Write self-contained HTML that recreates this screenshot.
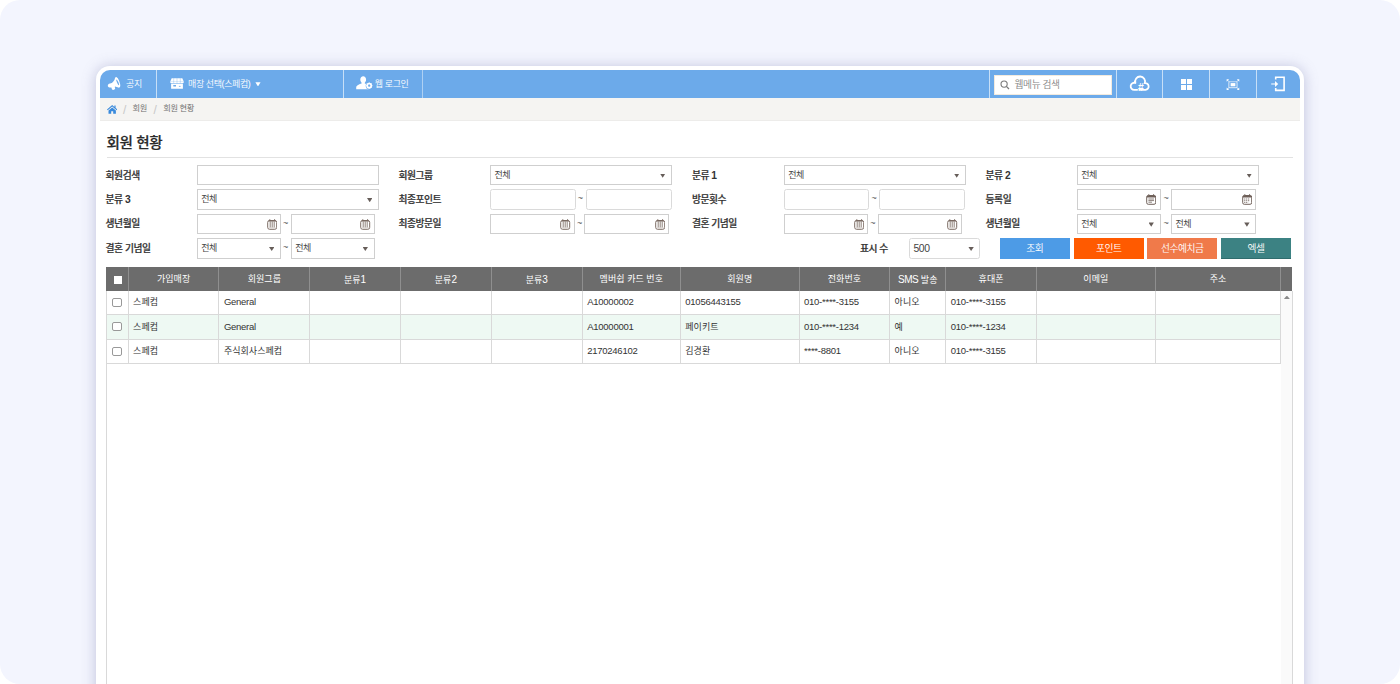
<!DOCTYPE html>
<html lang="ko">
<head>
<meta charset="utf-8">
<title>회원 현황</title>
<style>
*{box-sizing:border-box;margin:0;padding:0}
html,body{width:1400px;height:684px;overflow:hidden;background:#fff}
body{font-family:"Liberation Sans","Noto Sans CJK KR",sans-serif;color:#333;font-weight:350}
.bg{position:absolute;left:0;top:0;width:1400px;height:684px;border-radius:20px;background:#f3f5fe;overflow:hidden}
.card{position:absolute;left:96px;top:66px;width:1208px;height:700px;background:#fff;border-radius:14px;box-shadow:0 1px 13px 1px rgba(110,114,165,.34)}
.app{position:absolute;left:4px;top:4px;width:1200px;height:696px;background:#fff;border-radius:10px;overflow:hidden}
.abs{position:absolute}
.topbar{position:absolute;left:0;top:0;width:1200px;height:28px;background:#6caaea;color:#fff;font-size:10px}
.sep{position:absolute;top:0;width:1px;height:28px;background:rgba(255,255,255,.62)}
.tb-t{position:absolute;top:0;height:28px;line-height:28px;white-space:nowrap;font-size:9px;letter-spacing:-.4px}
.crumb{position:absolute;left:0;top:28px;width:1200px;height:22.6px;background:#f5f4f2;border-bottom:1px solid #edecea;font-size:8.25px;letter-spacing:-.35px;color:#6a6a6a}
.crumb span{position:absolute;top:0;line-height:22.6px;white-space:nowrap}
.crumb span.sl{font-size:12px;color:#c8c8c8;line-height:24.4px;letter-spacing:0}
.title{position:absolute;left:6.5px;top:61px;height:24px;line-height:24px;font-size:14.6px;letter-spacing:-.4px;font-weight:500;-webkit-text-stroke:.22px #2a2a2a;color:#2a2a2a;white-space:nowrap}
.hr{position:absolute;left:6.7px;top:87px;width:1186px;height:1px;background:#e2e2e2}
.lbl{position:absolute;height:20.3px;line-height:20.3px;font-size:9.75px;letter-spacing:-.45px;font-weight:500;-webkit-text-stroke:.22px #333;color:#333;white-space:nowrap;margin-top:.6px}
.lbl b{font-size:10.3px;letter-spacing:0;font-weight:bold;-webkit-text-stroke:0}
.inp{position:absolute;height:20.3px;background:#fff;border:1px solid #cfcfcf;font-size:9px;font-weight:400;letter-spacing:-.4px;line-height:19.4px;color:#444;padding-left:3.2px;white-space:nowrap}
.inp.r{border-radius:2.5px;border-color:#dadada}
.inp i.a{position:absolute;top:7.6px;right:5.6px;width:5.4px;height:4.2px;background:#665d59;clip-path:polygon(0 0,100% 0,50% 100%)}
.inp svg{position:absolute;top:3.7px;right:3.1px;width:10.4px;height:11px}
.til{position:absolute;height:20.3px;line-height:19px;font-size:9px;color:#555}
.btn{position:absolute;top:168.3px;height:20.6px;width:70.2px;color:#fff;font-size:9.75px;letter-spacing:-.45px;line-height:22.8px;text-align:center;white-space:nowrap}
.grid{position:absolute;left:5.6px;top:196.6px;width:1186.9px;height:500px}
.grid:before{content:'';position:absolute;left:0;top:24.4px;width:1px;height:480px;background:#d9d9d9;z-index:2}
.grid:after{content:'';position:absolute;left:1186px;top:24.4px;width:1px;height:480px;background:#d9d9d9}
.gh{position:absolute;left:0;top:0;width:1186.9px;height:24.4px;background:#6c6c6c}
.gh div{position:absolute;top:0;height:24.4px;line-height:25.4px;text-align:center;color:#fff;font-size:9px;letter-spacing:.05px;font-weight:400;border-left:1px solid #8f8f8f;white-space:nowrap}
.row{position:absolute;left:0;width:1175.7px;height:24.4px;border-bottom:1px solid #d9d9d9;border-right:1px solid #d9d9d9}
.row.alt{background:#eef9f3}
.row div{position:absolute;top:0;height:24.4px;line-height:24.6px;font-size:9px;color:#333;border-left:1px solid #d9d9d9;padding-left:4.4px;white-space:nowrap}
.row.r3 div{line-height:23.4px}
.row.r1 div{line-height:23px;height:23.7px}
.row div.k{letter-spacing:.05px;font-weight:400}
.row div.n{font-size:9.5px;letter-spacing:-.25px;line-height:22.6px}
.row.r1 div.n{line-height:21px}
.row.alt div.n{line-height:24.6px}
.row.r3 div.n{line-height:21.4px}
.cb{position:absolute;left:6.9px;top:7.2px;width:9.2px;height:9.2px;border:1px solid #999;border-radius:2px;background:#fff}
.sb{position:absolute;left:1175.7px;top:24.4px;width:11px;height:480px;background:#fafafa}
</style>
</head>
<body>
<div class="bg">
<div class="card">
<div class="app">

<!-- top bar -->
<div class="topbar">
  <svg class="abs" style="left:0;top:0" width="30" height="28" viewBox="0 0 30 28"><path d="M16.1 6.9 C17.6 7 19.4 10.4 20.1 14.1 C20.4 15.8 20.3 16.6 19.9 17 C19.5 17.6 18.9 17.7 18.4 17.6 L15 16.6 L14.8 17.1 L15.2 19 L13.3 20.1 L12 19.4 L11.4 17.6 L9.6 17.4 C8.4 17.2 7.7 16.4 7.8 15.4 C7.9 14.6 8.3 14 9 13.7 C10.5 13.2 11.6 13 12.4 12.4 C13.4 11.6 14.2 10.8 14.6 9.6 C14.9 8.6 15.1 7 16.1 6.9 Z" fill="#fff"/><ellipse cx="17.7" cy="12.4" rx="0.7" ry="3.1" transform="rotate(-25 17.7 12.4)" fill="#6caaea"/></svg>
  <span class="tb-t" style="left:26px">공지</span>
  <i class="sep" style="left:56px"></i>
  <svg class="abs" style="left:69.7px;top:7.7px" width="14" height="11" viewBox="0 0 14 11"><path d="M1.7 0.2 H12.3 L13.8 3.7 C13.8 4.8 13.2 5.3 12.4 5.3 H1.6 C0.8 5.3 0.2 4.8 0.2 3.7 Z" fill="#fff"/><rect x="1.1" y="5.7" width="11.8" height="5.1" rx=".4" fill="#fff"/><path d="M3.7 0.2V5.3M7 0.2V5.3M10.3 0.2V5.3" stroke="#6caaea" stroke-width=".45" opacity=".7"/><path d="M0.4 3.5H13.6" stroke="#6caaea" stroke-width=".35" opacity=".6"/><rect x="3.3" y="7" width="2.7" height="1.5" fill="#6caaea"/><rect x="8.9" y="7.9" width="1.7" height=".8" fill="#6caaea"/></svg>
  <span class="tb-t" style="left:88px">매장 선택(스페컴)</span>
  <i class="abs" style="left:155.4px;top:12.3px;width:5.2px;height:4.2px;background:#fff;clip-path:polygon(0 0,100% 0,50% 100%)"></i>
  <i class="sep" style="left:243px"></i>
  <svg class="abs" style="left:255.6px;top:6.4px" width="17" height="14" viewBox="0 0 17 14"><path d="M7.2 0.3 C8.9 0.3 10.1 1.6 10.1 3.5 C10.1 4.9 9.6 6 8.8 6.7 V7.6 C10.6 8.3 12.6 9.4 12.6 11.6 V13.2 H0.2 V11.6 C0.2 9.4 3.6 8.3 5.6 7.6 V6.7 C4.8 6 4.3 4.9 4.3 3.5 C4.3 1.6 5.5 0.3 7.2 0.3 Z" fill="#fff"/><circle cx="13.2" cy="9.7" r="3.5" fill="#6caaea"/><circle cx="13.2" cy="9.7" r="2" fill="none" stroke="#fff" stroke-width="1.7"/><path d="M13.2 6.4V13M9.9 9.7H16.5M10.9 7.4L15.5 12M15.5 7.4L10.9 12" stroke="#fff" stroke-width=".9"/><circle cx="13.2" cy="9.7" r="1.15" fill="#6caaea"/></svg>
  <span class="tb-t" style="left:274.8px">웹 로그인</span>
  <i class="sep" style="left:322.3px;background:rgba(255,255,255,.45)"></i>

  <i class="sep" style="left:889.3px"></i>
  <div class="abs" style="left:893.6px;top:4.6px;width:118.6px;height:20px;background:#fff;border:1px solid #f2eade"></div>
  <svg class="abs" style="left:899.6px;top:10px" width="10" height="10" viewBox="0 0 10 10"><circle cx="4.1" cy="4.1" r="3.1" fill="none" stroke="#7a7a7a" stroke-width="1.1"/><path d="M6.4 6.4 L9 9" stroke="#7a7a7a" stroke-width="1.3"/></svg>
  <span class="tb-t" style="left:914.6px;color:#858585;font-size:9.75px;letter-spacing:-.45px;top:.9px">웹메뉴 검색</span>
  <i class="sep" style="left:1016.4px"></i>
  <svg class="abs" style="left:1028.6px;top:5.4px" width="22" height="17" viewBox="0 0 22 17"><path d="M8.2 14.85 H5.2 A3.55 3.55 0 1 1 6.4 7.95 A4.95 4.95 0 1 1 15.75 8.2 A3.35 3.35 0 1 1 16.5 14.85 H10.4" fill="none" stroke="#fff" stroke-width="1.8" stroke-linecap="round" stroke-linejoin="round"/><text x="12" y="15.6" text-anchor="middle" font-family="Liberation Sans, sans-serif" font-weight="bold" font-size="10.4" fill="#fff">#</text></svg>
  <i class="sep" style="left:1062.3px"></i>
  <svg class="abs" style="left:1081px;top:8.8px" width="11" height="11" viewBox="0 0 11 11"><rect x="0" y="0" width="5" height="5" fill="#fff"/><rect x="6" y="0" width="5" height="5" fill="#fff"/><rect x="0" y="6" width="5" height="5" fill="#fff"/><rect x="6" y="6" width="5" height="5" fill="#fff"/></svg>
  <i class="sep" style="left:1109.4px"></i>
  <svg class="abs" style="left:1126.2px;top:8.7px" width="13.8" height="11.4" viewBox="0 0 14 12"><path d="M0.4 0.3H3L0.4 2.9ZM13.7 0.3V2.9L11.1 0.3ZM13.7 11.5H11.1L13.7 8.9ZM0.4 11.5V8.9L3 11.5Z" fill="#fff"/><path d="M1.3 1.2L3 2.9M12.8 1.2L11.1 2.9M12.8 10.6L11.1 8.9M1.3 10.6L3 8.9" stroke="#fff" stroke-width=".9"/><rect x="2.7" y="2.9" width="8.7" height="6.2" rx="1" fill="none" stroke="#fff" stroke-width="1.3" opacity=".6"/><rect x="4.6" y="4.3" width="5" height="3.4" fill="#fff"/></svg>
  <i class="sep" style="left:1156.2px"></i>
  <svg class="abs" style="left:1170px;top:5px" width="16" height="18" viewBox="0 0 16 18"><path d="M5.7 4.6V2.2H14.1V15.4H5.7V13" fill="none" stroke="#fff" stroke-width="1.6"/><path d="M1.2 9H6" stroke="#fff" stroke-width="1.15"/><path d="M5 5.9L8.2 9L5 12.1Z" fill="#fff"/></svg>
</div>

<!-- breadcrumb -->
<div class="crumb">
  <svg class="abs" style="left:6.8px;top:6.8px" width="10.4" height="8.8" viewBox="0 0 10.4 8.8"><path d="M5.2 0L0 4.4L0.7 5.2L5.2 1.5L9.7 5.2L10.4 4.4L8.6 2.9V0.6H7.4V1.9Z" fill="#3a8adc"/><path d="M5.2 2.4L1.5 5.5V8.8H4.2V6.2H6.2V8.8H8.9V5.5Z" fill="#3a8adc"/></svg>
  <span class="sl" style="left:22.9px">/</span>
  <span style="left:32.6px">회원</span>
  <span class="sl" style="left:53.6px">/</span>
  <span style="left:63.2px">회원 현황</span>
</div>

<div class="title">회원 현황</div>
<div class="hr"></div>

<!-- filter row 1 -->
<div class="lbl" style="left:5.6px;top:95px">회원검색</div>
<div class="inp" style="left:97px;top:95px;width:182px"></div>
<div class="lbl" style="left:298.4px;top:95px">회원그룹</div>
<div class="inp" style="left:390.3px;top:95px;width:181.7px">전체<i class="a"></i></div>
<div class="lbl" style="left:592px;top:95px">분류 <b>1</b></div>
<div class="inp" style="left:684px;top:95px;width:182px">전체<i class="a"></i></div>
<div class="lbl" style="left:885.6px;top:95px">분류 <b>2</b></div>
<div class="inp" style="left:977px;top:95px;width:181.5px">전체<i class="a"></i></div>

<!-- filter row 2 -->
<div class="lbl" style="left:5.6px;top:119.4px">분류 <b>3</b></div>
<div class="inp" style="left:97px;top:119.4px;width:182px">전체<i class="a"></i></div>
<div class="lbl" style="left:298.4px;top:119.4px">최종포인트</div>
<div class="inp r" style="left:390.3px;top:119.4px;width:85.4px"></div>
<span class="til" style="left:477.8px;top:119.4px">~</span>
<div class="inp r" style="left:486.3px;top:119.4px;width:86px"></div>
<div class="lbl" style="left:592px;top:119.4px">방문횟수</div>
<div class="inp r" style="left:684px;top:119.4px;width:84.6px"></div>
<span class="til" style="left:771.4px;top:119.4px">~</span>
<div class="inp r" style="left:779.4px;top:119.4px;width:85.4px"></div>
<div class="lbl" style="left:885.6px;top:119.4px">등록일</div>
<div class="inp" style="left:977px;top:119.4px;width:83.5px"><svg viewBox="0 0 10.4 11"><rect x="0.7" y="1.5" width="9" height="8.8" rx="1.6" fill="#fff" stroke="#6e5f58" stroke-width="1"/><path d="M0.9 2.6H9.5" stroke="#6e5f58" stroke-width="1.6"/><path d="M2.8 0.2V1.6M7.6 0.2V1.6" stroke="#6e5f58" stroke-width="1"/><path d="M2.4 5H8M2.4 6.6H8M2.4 8.2H6" stroke="#6e5f58" stroke-width=".8"/></svg></div>
<span class="til" style="left:1063.6px;top:119.4px">~</span>
<div class="inp" style="left:1071.2px;top:119.4px;width:85px"><svg viewBox="0 0 10.4 11"><rect x="0.7" y="1.5" width="9" height="8.8" rx="1.6" fill="#fff" stroke="#6e5f58" stroke-width="1"/><path d="M0.9 2.6H9.5" stroke="#6e5f58" stroke-width="1.6"/><path d="M2.8 0.2V1.6M7.6 0.2V1.6" stroke="#6e5f58" stroke-width="1"/><path d="M2.3 5H8.1M2.3 6.7H8.1M2.3 8.4H6.3" stroke="#6e5f58" stroke-width="1" stroke-dasharray="1 .95"/></svg></div>

<!-- filter row 3 -->
<div class="lbl" style="left:5.6px;top:143.9px">생년월일</div>
<div class="inp" style="left:97px;top:143.9px;width:84px"><svg viewBox="0 0 10.4 11"><rect x="0.7" y="1.5" width="9" height="8.8" rx="1.9" fill="#fff" stroke="#7a6a62" stroke-width="1"/><path d="M1.6 1.9H8.8" stroke="#7a6a62" stroke-width="1.2"/><path d="M2.8 0.2V2M7.6 0.2V2" stroke="#7a6a62" stroke-width="1"/><path d="M3.2 2.4V8.6M5.2 2.4V8.6M7.2 2.4V8.6" stroke="#7a6a62" stroke-width=".85"/><path d="M1.6 8.9H8.8" stroke="#cfc6c0" stroke-width=".8"/></svg></div>
<span class="til" style="left:183px;top:143.9px">~</span>
<div class="inp" style="left:191px;top:143.9px;width:83.6px"><svg viewBox="0 0 10.4 11"><rect x="0.7" y="1.5" width="9" height="8.8" rx="1.9" fill="#fff" stroke="#7a6a62" stroke-width="1"/><path d="M1.6 1.9H8.8" stroke="#7a6a62" stroke-width="1.2"/><path d="M2.8 0.2V2M7.6 0.2V2" stroke="#7a6a62" stroke-width="1"/><path d="M3.2 2.4V8.6M5.2 2.4V8.6M7.2 2.4V8.6" stroke="#7a6a62" stroke-width=".85"/><path d="M1.6 8.9H8.8" stroke="#cfc6c0" stroke-width=".8"/></svg></div>
<div class="lbl" style="left:298.4px;top:143.9px">최종방문일</div>
<div class="inp" style="left:390.3px;top:143.9px;width:84.4px"><svg viewBox="0 0 10.4 11"><rect x="0.7" y="1.5" width="9" height="8.8" rx="1.9" fill="#fff" stroke="#7a6a62" stroke-width="1"/><path d="M1.6 1.9H8.8" stroke="#7a6a62" stroke-width="1.2"/><path d="M2.8 0.2V2M7.6 0.2V2" stroke="#7a6a62" stroke-width="1"/><path d="M3.2 2.4V8.6M5.2 2.4V8.6M7.2 2.4V8.6" stroke="#7a6a62" stroke-width=".85"/><path d="M1.6 8.9H8.8" stroke="#cfc6c0" stroke-width=".8"/></svg></div>
<span class="til" style="left:477px;top:143.9px">~</span>
<div class="inp" style="left:484.3px;top:143.9px;width:85px"><svg viewBox="0 0 10.4 11"><rect x="0.7" y="1.5" width="9" height="8.8" rx="1.9" fill="#fff" stroke="#7a6a62" stroke-width="1"/><path d="M1.6 1.9H8.8" stroke="#7a6a62" stroke-width="1.2"/><path d="M2.8 0.2V2M7.6 0.2V2" stroke="#7a6a62" stroke-width="1"/><path d="M3.2 2.4V8.6M5.2 2.4V8.6M7.2 2.4V8.6" stroke="#7a6a62" stroke-width=".85"/><path d="M1.6 8.9H8.8" stroke="#cfc6c0" stroke-width=".8"/></svg></div>
<div class="lbl" style="left:592px;top:143.9px">결혼 기념일</div>
<div class="inp" style="left:684px;top:143.9px;width:84.2px"><svg viewBox="0 0 10.4 11"><rect x="0.7" y="1.5" width="9" height="8.8" rx="1.9" fill="#fff" stroke="#7a6a62" stroke-width="1"/><path d="M1.6 1.9H8.8" stroke="#7a6a62" stroke-width="1.2"/><path d="M2.8 0.2V2M7.6 0.2V2" stroke="#7a6a62" stroke-width="1"/><path d="M3.2 2.4V8.6M5.2 2.4V8.6M7.2 2.4V8.6" stroke="#7a6a62" stroke-width=".85"/><path d="M1.6 8.9H8.8" stroke="#cfc6c0" stroke-width=".8"/></svg></div>
<span class="til" style="left:770.2px;top:143.9px">~</span>
<div class="inp" style="left:778.3px;top:143.9px;width:83.4px"><svg viewBox="0 0 10.4 11"><rect x="0.7" y="1.5" width="9" height="8.8" rx="1.9" fill="#fff" stroke="#7a6a62" stroke-width="1"/><path d="M1.6 1.9H8.8" stroke="#7a6a62" stroke-width="1.2"/><path d="M2.8 0.2V2M7.6 0.2V2" stroke="#7a6a62" stroke-width="1"/><path d="M3.2 2.4V8.6M5.2 2.4V8.6M7.2 2.4V8.6" stroke="#7a6a62" stroke-width=".85"/><path d="M1.6 8.9H8.8" stroke="#cfc6c0" stroke-width=".8"/></svg></div>
<div class="lbl" style="left:885.6px;top:143.9px">생년월일</div>
<div class="inp" style="left:977px;top:143.9px;width:83.5px">전체<i class="a"></i></div>
<span class="til" style="left:1063.6px;top:143.9px">~</span>
<div class="inp" style="left:1071.2px;top:143.9px;width:85px">전체<i class="a"></i></div>

<!-- filter row 4 -->
<div class="lbl" style="left:5.6px;top:168.3px">결혼 기념일</div>
<div class="inp" style="left:97px;top:168.3px;width:84px">전체<i class="a"></i></div>
<span class="til" style="left:183px;top:168.3px">~</span>
<div class="inp" style="left:191px;top:168.3px;width:83.6px">전체<i class="a"></i></div>
<div class="lbl" style="left:760px;top:168.3px">표시 수</div>
<div class="inp r" style="left:809.4px;top:168.3px;width:71px"><span style="font-size:10.4px;letter-spacing:-.5px">500</span><i class="a"></i></div>
<div class="btn" style="left:899.6px;background:#4d9be6">조회</div>
<div class="btn" style="left:973.6px;background:#ff5a00">포인트</div>
<div class="btn" style="left:1047.2px;background:#f07a4a">선수예치금</div>
<div class="btn" style="left:1121px;background:#3c8283;border-bottom:1px solid #2f6c6d">엑셀</div>

<!-- grid -->
<div class="grid">
  <div class="gh">
    <div style="left:0;width:22.1px;border-left:0"><i class="abs" style="left:8px;top:9.4px;width:8px;height:8px;background:#fff"></i></div>
    <div style="left:22.1px;width:90.8px">가입매장</div>
    <div style="left:112.9px;width:90.7px">회원그룹</div>
    <div style="left:203.6px;width:90.7px">분류<span style="font-size:10px">1</span></div>
    <div style="left:294.3px;width:91px">분류<span style="font-size:10px">2</span></div>
    <div style="left:385.3px;width:90.9px">분류<span style="font-size:10px">3</span></div>
    <div style="left:476.2px;width:98.1px">멤버쉽 카드 번호</div>
    <div style="left:574.3px;width:118.7px">회원명</div>
    <div style="left:693px;width:90.6px">전화번호</div>
    <div style="left:783.6px;width:56.1px"><span style="font-size:10px;letter-spacing:-.45px">SMS</span> 발송</div>
    <div style="left:839.7px;width:90.6px">휴대폰</div>
    <div style="left:930.3px;width:118.9px">이메일</div>
    <div style="left:1049.2px;width:125.5px">주소</div>
    <div style="left:1174.7px;width:12.2px"></div>
  </div>
  <div class="sb"><i class="abs" style="left:2.6px;top:4.6px;width:6px;height:3.4px;background:#8a8a8a;clip-path:polygon(0 100%,100% 100%,50% 0)"></i></div>

  <div class="row r1" style="top:24.4px;height:23.7px">
    <div style="left:0;width:22.1px;border-left:0"><i class="cb"></i></div>
    <div style="left:22.1px;width:90.8px" class="k">스페컴</div>
    <div style="left:112.9px;width:90.7px" class="n">General</div>
    <div style="left:203.6px;width:90.7px"></div>
    <div style="left:294.3px;width:91px"></div>
    <div style="left:385.3px;width:90.9px"></div>
    <div style="left:476.2px;width:98.1px" class="n">A10000002</div>
    <div style="left:574.3px;width:118.7px" class="n">01056443155</div>
    <div style="left:693px;width:90.6px" class="n">010-****-3155</div>
    <div style="left:783.6px;width:56.1px" class="k">아니오</div>
    <div style="left:839.7px;width:90.6px" class="n">010-****-3155</div>
    <div style="left:930.3px;width:118.9px"></div>
    <div style="left:1049.2px;width:125.5px"></div>
  </div>
  <div class="row alt" style="top:48.1px;height:25px">
    <div style="left:0;width:22.1px;border-left:0"><i class="cb"></i></div>
    <div style="left:22.1px;width:90.8px" class="k">스페컴</div>
    <div style="left:112.9px;width:90.7px" class="n">General</div>
    <div style="left:203.6px;width:90.7px"></div>
    <div style="left:294.3px;width:91px"></div>
    <div style="left:385.3px;width:90.9px"></div>
    <div style="left:476.2px;width:98.1px" class="n">A10000001</div>
    <div style="left:574.3px;width:118.7px" class="k">페이키트</div>
    <div style="left:693px;width:90.6px" class="n">010-****-1234</div>
    <div style="left:783.6px;width:56.1px" class="k">예</div>
    <div style="left:839.7px;width:90.6px" class="n">010-****-1234</div>
    <div style="left:930.3px;width:118.9px"></div>
    <div style="left:1049.2px;width:125.5px"></div>
  </div>
  <div class="row r3" style="top:73.1px">
    <div style="left:0;width:22.1px;border-left:0"><i class="cb"></i></div>
    <div style="left:22.1px;width:90.8px" class="k">스페컴</div>
    <div style="left:112.9px;width:90.7px" class="k">주식회사스페컴</div>
    <div style="left:203.6px;width:90.7px"></div>
    <div style="left:294.3px;width:91px"></div>
    <div style="left:385.3px;width:90.9px"></div>
    <div style="left:476.2px;width:98.1px" class="n">2170246102</div>
    <div style="left:574.3px;width:118.7px" class="k">김경환</div>
    <div style="left:693px;width:90.6px" class="n">****-8801</div>
    <div style="left:783.6px;width:56.1px" class="k">아니오</div>
    <div style="left:839.7px;width:90.6px" class="n">010-****-3155</div>
    <div style="left:930.3px;width:118.9px"></div>
    <div style="left:1049.2px;width:125.5px"></div>
  </div>
</div>



</div>
</div>
</div>
</body>
</html>
